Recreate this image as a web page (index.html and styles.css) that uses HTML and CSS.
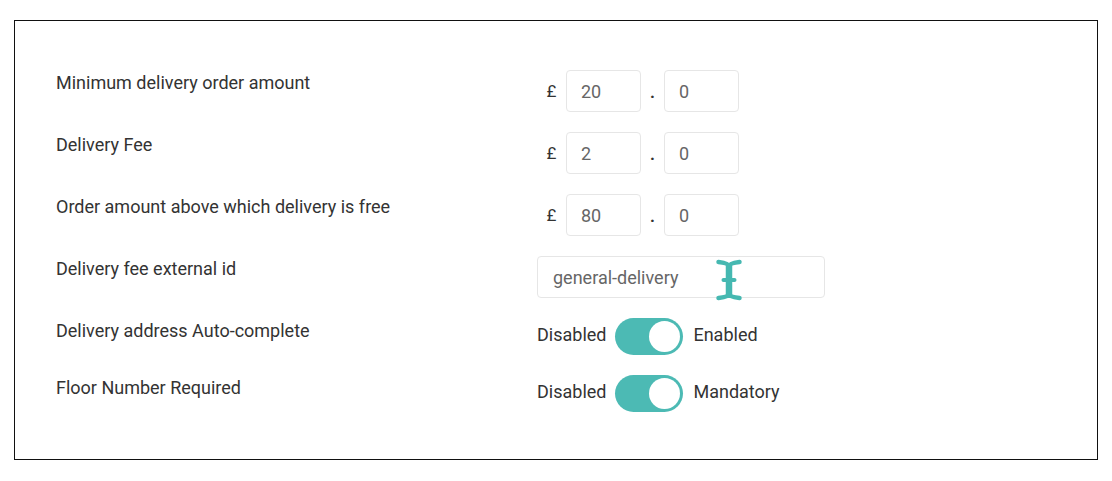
FILE: index.html
```html
<!DOCTYPE html>
<html>
<head>
<meta charset="utf-8">
<link rel="stylesheet" href="styles.css">
</head>
<body>
<div class="panel">
  <div class="rows">
    <div class="row">
      <div class="label">Minimum delivery order amount</div>
      <div class="control amount">
        <span class="currency">£</span>
        <div class="field small">20</div>
        <span class="dot">.</span>
        <div class="field small">0</div>
      </div>
    </div>
    <div class="row">
      <div class="label">Delivery Fee</div>
      <div class="control amount">
        <span class="currency">£</span>
        <div class="field small">2</div>
        <span class="dot">.</span>
        <div class="field small">0</div>
      </div>
    </div>
    <div class="row">
      <div class="label">Order amount above which delivery is free</div>
      <div class="control amount">
        <span class="currency">£</span>
        <div class="field small">80</div>
        <span class="dot">.</span>
        <div class="field small">0</div>
      </div>
    </div>
    <div class="row">
      <div class="label">Delivery fee external id</div>
      <div class="control">
        <div class="field wide">general-delivery
          <svg class="ibeam" width="26" height="42" viewBox="0 0 26 42">
            <path d="M2.5 3 Q13 4 13 8 Q13 4 23.5 3" fill="none" stroke="#45b8b1" stroke-width="4.5" stroke-linecap="round"/>
            <path d="M13 7 L13 35" stroke="#45b8b1" stroke-width="6.5"/>
            <path d="M7.5 21 L18.5 21" stroke="#45b8b1" stroke-width="4" stroke-linecap="round"/>
            <path d="M2.5 39 Q13 38 13 34 Q13 38 23.5 39" fill="none" stroke="#45b8b1" stroke-width="4.5" stroke-linecap="round"/>
          </svg>
        </div>
      </div>
    </div>
    <div class="row toggle-row">
      <div class="label">Delivery address Auto-complete</div>
      <div class="control switch-line">
        <span class="opt">Disabled</span>
        <span class="switch"><span class="knob"></span></span>
        <span class="opt">Enabled</span>
      </div>
    </div>
    <div class="row toggle-row">
      <div class="label">Floor Number Required</div>
      <div class="control switch-line">
        <span class="opt">Disabled</span>
        <span class="switch"><span class="knob"></span></span>
        <span class="opt">Mandatory</span>
      </div>
    </div>
  </div>
</div>
</body>
</html>
```
FILE: styles.css
```css
html, body {
  margin: 0;
  padding: 0;
  background: #ffffff;
}
body {
  font-family: Roboto, "Liberation Sans", Arial, sans-serif;
  color: #333333;
}
.panel {
  box-sizing: border-box;
  margin: 20px 0 0 14px;
  width: 1084px;
  height: 440px;
  border: 1px solid #111111;
  padding: 49px 0 0 41px;
}
.rows {
  display: flex;
  flex-direction: column;
  gap: 20px;
}
.row {
  display: flex;
  align-items: flex-start;
  height: 42px;
}
.toggle-row {
  height: 37px;
}
.label {
  width: 481px;
  font-size: 18px;
  line-height: 24px;
  padding-top: 1px;
  color: #333333;
}
.control {
  display: flex;
  align-items: center;
  height: 100%;
}
.currency {
  width: 29px;
  text-align: center;
  font-size: 17px;
  color: #333;
}
.dot {
  width: 23px;
  text-align: center;
  font-size: 17px;
  color: #333;
  font-weight: bold;
  padding-top: 2px;
}
.field {
  box-sizing: border-box;
  border: 1px solid #e6e6e6;
  border-radius: 4px;
  font-size: 18px;
  color: #666666;
  display: flex;
  align-items: center;
}
.small {
  width: 75px;
  height: 42px;
  padding-left: 14px;
}
.wide {
  position: relative;
  width: 288px;
  height: 42px;
  padding-left: 15px;
}
.ibeam {
  position: absolute;
  left: 178px;
  top: 2px;
}
.switch-line {
  gap: 0;
}
.opt {
  font-size: 18px;
  color: #333;
  padding-bottom: 4px;
}
.switch {
  display: flex;
  align-items: center;
  justify-content: flex-end;
  box-sizing: border-box;
  width: 68px;
  height: 37px;
  border-radius: 19px;
  background: #4cbab4;
  padding-right: 3px;
  margin: 0 10px 0 9px;
}
.knob {
  width: 31px;
  height: 31px;
  border-radius: 50%;
  background: #ffffff;
}
```
